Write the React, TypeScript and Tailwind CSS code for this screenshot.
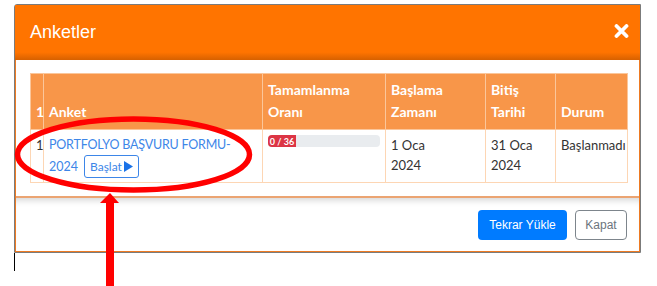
import { FC } from "react";

const th =
  "border border-[#fbc69a] px-[5px] pt-[5px] pb-[6px] align-bottom text-left font-bold text-white text-[14px] leading-[22px]";
const td =
  "border border-[#fdd6b4] px-[5px] pt-[5px] pb-[4px] align-top text-[13px] leading-[20px] text-[#333]";

const ProgressBar: FC<{ done: number; total: number }> = ({ done, total }) => {
  return (
    <div className="flex h-[12px] w-full overflow-hidden rounded-[4px] bg-[#e9ecef]">
      <div className="flex w-[28px] items-center justify-center bg-[#dc3545] text-[9px] font-bold leading-none text-white">
        {done} / {total}
      </div>
    </div>
  );
};

const Annotation: FC = () => (
  <svg
    className="pointer-events-none absolute left-0 top-0"
    width={657}
    height={286}
    viewBox="0 0 657 286"
  >
    <ellipse cx={133.5} cy={154.5} rx={116} ry={35.5} fill="none" stroke="#ff0000" strokeWidth={5.5} />
    <polygon points="110,193 100,203 119,203" fill="#ff0000" />
    <rect x={106} y={202} width={8} height={84} fill="#ff0000" />
  </svg>
);

const App: FC = () => {
  return (
    <div className="relative h-[286px] w-[657px] overflow-hidden bg-white font-['Liberation_Sans',Arial,sans-serif]">
      <div className="ml-[14px] mt-[4px] w-[627px] rounded-tl-[3px] border border-[#7b7b7b]">
        <div className="border border-[#ee7a22] border-t-0 rounded-tl-[3px]">
          <div className="flex h-[55px] items-center justify-between bg-[linear-gradient(to_bottom,#ff7400_0%,#ff7400_86%,#d76100_100%)] pl-[15px] pr-[11px] -mx-px">
            <span className="text-[18px] leading-none text-white pb-[2px]">Anketler</span>
            <svg width={15} height={14} viewBox="0 0 15 14" className="mb-[3px]">
              <path d="M2.5 2 L12.5 12 M12.5 2 L2.5 12" stroke="#fff" strokeWidth={3.8} strokeLinecap="round" />
            </svg>
          </div>
          <div className="pl-[14px] pr-[12px] pt-[13px] pb-[13px] font-['Lato',sans-serif]">
            <table className="w-[597px] table-fixed border-collapse">
              <colgroup>
                <col className="w-[13px]" />
                <col className="w-[219px]" />
                <col className="w-[123px]" />
                <col className="w-[100px]" />
                <col className="w-[70px]" />
                <col className="w-[72px]" />
              </colgroup>
              <thead>
                <tr className="bg-[#f89649]">
                  <th className={th + " px-[3px]"}>1</th>
                  <th className={th}>Anket</th>
                  <th className={th}>Tamamlanma Oranı</th>
                  <th className={th}>Başlama Zamanı</th>
                  <th className={th}>Bitiş Tarihi</th>
                  <th className={th}>Durum</th>
                </tr>
              </thead>
              <tbody>
                <tr>
                  <td className={td + " px-[3px]"}>1</td>
                  <td className={td}>
                    <div className="text-[12.5px] tracking-[-0.2px] text-[#3d86e8]">PORTFOLYO BAŞVURU FORMU-</div>
                    <div className="flex items-center gap-[6px]">
                      <span className="text-[12.5px] text-[#3d86e8]">2024</span>
                      <button className="inline-flex h-[23px] items-center gap-[2px] rounded-[3px] border border-[#3d86e8] px-[5px] text-[12px] text-[#3d86e8]">
                        <span>Başlat</span>
                        <svg width={9} height={11} viewBox="0 0 9 11">
                          <polygon points="0,0 9,5.5 0,11" fill="#1a73e8" />
                        </svg>
                      </button>
                    </div>
                  </td>
                  <td className={td}>
                    <ProgressBar done={0} total={36} />
                  </td>
                  <td className={td}>
                    1 Oca
                    <br />
                    2024
                  </td>
                  <td className={td}>
                    31 Oca
                    <br />
                    2024
                  </td>
                  <td className={td + " whitespace-nowrap"}>Başlanmadı</td>
                </tr>
              </tbody>
            </table>
          </div>
          <div className="flex h-[55px] items-center justify-end gap-[8px] border-t-2 border-[#eba472] pr-[12px] shadow-[inset_0_7px_7px_-5px_rgba(0,0,0,0.18)]">
            <button className="h-[30px] w-[89px] rounded-[4px] bg-[#007bff] text-[12px] text-white">
              Tekrar Yükle
            </button>
            <button className="h-[30px] w-[52px] rounded-[4px] border border-[#7d858c] text-[12px] text-[#6c757d]">
              Kapat
            </button>
          </div>
        </div>
      </div>
      <div className="ml-[14px] h-[18px] w-px bg-black" />
      <Annotation />
    </div>
  );
};

export default App;
